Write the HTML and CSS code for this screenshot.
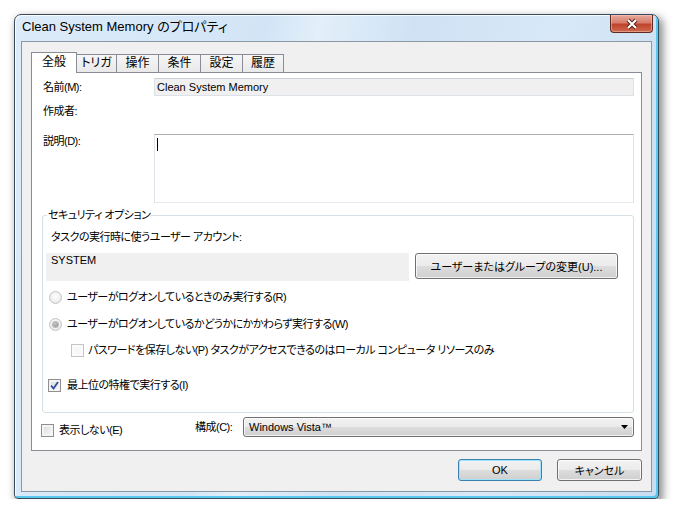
FILE: index.html
```html
<!doctype html>
<html lang="ja">
<head>
    <meta charset="UTF-8">
    <meta name="viewport" content="width=device-width, initial-scale=1.0">
    <title>Clean System Memory のプロパティ</title>

    <link rel="stylesheet" href="styles.css">
</head>
<body>
    <div class="window">
        <div class="titlebar">
            <span class="title">Clean System Memory のプロパティ</span>
            <button class="close" title="閉じる">
                <svg width="14" height="12" viewBox="0 0 14 12">
                    <path d="M3 2 L11 10 M11 2 L3 10" stroke="#5b2a22" stroke-width="4.2" fill="none"/>
                    <path d="M3 2 L11 10 M11 2 L3 10" stroke="#ffffff" stroke-width="2" fill="none"/>
                </svg>
            </button>
        </div>

        <div class="client">
            <div class="tabs">
                <div class="tab active" style="width: 46px">全般</div>
                <div class="tab" style="width: 41px">トリガ</div>
                <div class="tab" style="width: 43px">操作</div>
                <div class="tab" style="width: 43px">条件</div>
                <div class="tab" style="width: 43px">設定</div>
                <div class="tab" style="width: 42px">履歴</div>
            </div>

            <div class="panel">
                <div class="row name-row">
                    <label>名前(M):</label>
                    <div class="field readonly latin">Clean System Memory</div>
                </div>

                <div class="row author-row">
                    <label>作成者:</label>
                </div>

                <div class="row desc-row">
                    <label>説明(D):</label>
                    <div class="field textarea"><span class="caret"></span></div>
                </div>

                <fieldset class="group">
                    <legend>セキュリティ オプション</legend>

                    <p class="account-label">タスクの実行時に使うユーザー アカウント:</p>

                    <div class="account">
                        <div class="account-box latin">SYSTEM</div>
                        <button class="btn change-user">ユーザーまたはグループの変更(U)...</button>
                    </div>

                    <div class="option radio-1">
                        <span class="radio disabled"></span>
                        <span>ユーザーがログオンしているときのみ実行する(R)</span>
                    </div>

                    <div class="option radio-2">
                        <span class="radio disabled checked"></span>
                        <span>ユーザーがログオンしているかどうかにかかわらず実行する(W)</span>
                    </div>

                    <div class="option no-password">
                        <span class="check disabled"></span>
                        <span>パスワードを保存しない(P) タスクがアクセスできるのはローカル コンピュータ リソースのみ</span>
                    </div>

                    <div class="option highest">
                        <span class="check">
                            <svg width="9" height="9" viewBox="0 0 9 9">
                                <path d="M1 4.5 L3.5 7.5 L8 1" stroke="#2c4f9e" stroke-width="1.8" fill="none"/>
                            </svg>
                        </span>
                        <span>最上位の特権で実行する(I)</span>
                    </div>
                </fieldset>

                <div class="bottom-row">
                    <div class="option hidden-opt">
                        <span class="check"></span>
                        <span>表示しない(E)</span>
                    </div>
                    <label class="config-label">構成(C):</label>
                    <div class="combo">
                        <span class="latin">Windows Vista™</span>
                        <svg width="7" height="4" viewBox="0 0 7 4"><path d="M0 0 H7 L3.5 4 Z" fill="#000"/></svg>
                    </div>
                </div>
            </div>

            <div class="actions">
                <button class="btn default ok latin">OK</button>
                <button class="btn cancel">キャンセル</button>
            </div>
        </div>
    </div>
</body>
</html>
```

FILE: styles.css
```css
body {
    margin: 0;
    background-color: #ffffff;
    font-family: "Liberation Sans", "Noto Sans CJK JP", sans-serif;
    font-size: 11px;
    letter-spacing: -0.5px;
    font-feature-settings: "palt";
    color: #000;
    user-select: none;
}

.latin {
    letter-spacing: 0;
}

.window {
    margin: 14px 0 0 14px;
    width: 645px;
    height: 485px;
    box-sizing: border-box;
    display: flex;
    flex-direction: column;
    border: 1px solid #3a4a5c;
    border-radius: 7px 7px 4px 4px;
    background: linear-gradient(100deg, #dcebf9 0%, #d2e5f6 35%, #e3eff9 42%, #cfe2f4 55%, #d8e8f7 75%, #c8ddf1 100%);
    box-shadow: inset 1px 1px 0 rgba(255, 255, 255, .85),
                inset -2px -2px 0 #58c8ef,
                3px 4px 9px 1px rgba(0, 0, 0, .45);
}

.titlebar {
    height: 26px;
    display: flex;
    align-items: flex-start;
    justify-content: space-between;
}

.title {
    font-size: 13px;
    letter-spacing: 0;
    margin: 4px 0 0 7px;
    line-height: 16px;
    color: #000;
}

.close {
    width: 43px;
    height: 18px;
    margin: 0 5px 0 0;
    padding: 0;
    border: 1px solid #5e2a22;
    border-top: 0;
    border-radius: 0 0 4px 4px;
    background: linear-gradient(#e8a99d 0%, #d67d6b 45%, #c0432c 55%, #cf6a4f 100%);
    box-shadow: inset 0 0 0 1px rgba(255, 210, 200, .45);
    display: flex;
    align-items: center;
    justify-content: center;
}

.client {
    flex: 1;
    margin: 0 6px 6px 6px;
    border: 1px solid #8c97a4;
    background-color: #f0f0f0;
    padding-top: 10px;
    display: flex;
    flex-direction: column;
}

.tabs {
    display: flex;
    align-items: flex-end;
    height: 20px;
    margin-left: 9px;
    font-size: 12px;
    letter-spacing: 0;
}

.tab {
    height: 18px;
    box-sizing: border-box;
    border: 1px solid #898c95;
    border-bottom: 0;
    margin-left: -1px;
    background: linear-gradient(#f6f6f6, #e9e9e9);
    text-align: center;
    line-height: 17px;
}

.tab.active {
    height: 21px;
    margin: 0 0 -1px 0;
    background: #ffffff;
    line-height: 18px;
    position: relative;
    z-index: 1;
}

.panel {
    margin: 0 9px;
    height: 379px;
    box-sizing: border-box;
    border: 1px solid #898c95;
    background-color: #ffffff;
    padding: 5px 7px 0 10px;
}

.row {
    display: grid;
    grid-template-columns: 112px 1fr;
}

.row label {
    padding-left: 1px;
}

.name-row {
    height: 18px;
    line-height: 18px;
}

.author-row {
    margin-top: 6px;
    height: 18px;
    line-height: 18px;
}

.desc-row {
    margin-top: 14px;
    height: 69px;
}

.desc-row label {
    line-height: 14px;
}

.field {
    box-sizing: border-box;
    border: 1px solid #dbe1e6;
}

.readonly {
    background-color: #f0f0f0;
    border-top-color: #ccd1d6;
    padding-left: 2px;
    line-height: 16px;
}

.textarea {
    background: #ffffff;
    border-color: #abadb3 #e2e3ea #e3e9ef #e2e3ea;
    padding: 3px 0 0 2px;
}

.caret {
    display: block;
    width: 1px;
    height: 13px;
    background-color: #000;
}

.group {
    margin: 4px 0 0 0;
    height: 206px;
    box-sizing: border-box;
    border: 1px solid #d5dfe5;
    border-radius: 3px;
    padding: 0 0 0 4px;
}

.group legend {
    padding: 0 1px;
    line-height: 16px;
}

.account-label {
    margin: 6px 0 0 4px;
    line-height: 16px;
}

.account {
    display: flex;
    align-items: flex-start;
    gap: 6px;
    margin: 8px 0 0 -1px;
}

.account-box {
    width: 363px;
    height: 28px;
    box-sizing: border-box;
    background-color: #f0f0f0;
    padding: 0 0 0 5px;
    line-height: 14px;
}

.btn {
    font: inherit;
    color: #000;
    box-sizing: border-box;
    border: 1px solid #707070;
    border-radius: 3px;
    background: linear-gradient(#f2f2f2 0%, #ebebeb 50%, #dddddd 51%, #cfcfcf 100%);
    box-shadow: inset 0 0 0 1px rgba(255, 255, 255, .75);
    padding: 0;
}

.change-user {
    width: 203px;
    height: 26px;
}

.option {
    display: flex;
    align-items: center;
    height: 16px;
    line-height: 16px;
}

.radio-1 {
    margin: 8px 0 0 2px;
    gap: 5px;
}

.radio-2 {
    margin: 11px 0 0 2px;
    gap: 5px;
}

.no-password {
    margin: 10px 0 0 24px;
    gap: 4px;
}

.highest {
    margin: 19px 0 0 1px;
    gap: 6px;
}

.radio {
    width: 13px;
    height: 13px;
    box-sizing: border-box;
    border-radius: 50%;
    border: 1px solid #c4c4c4;
    background: radial-gradient(circle at 50% 40%, #ffffff 0%, #eeeeee 60%, #e2e2e2 100%);
    display: flex;
    align-items: center;
    justify-content: center;
}

.radio.checked::after {
    content: "";
    width: 5px;
    height: 5px;
    border-radius: 50%;
    background: radial-gradient(circle at 40% 35%, #c6c6c6, #8a8a8a);
    box-shadow: 0 0 0 1px #b7b7b7;
}

.check {
    width: 13px;
    height: 13px;
    box-sizing: border-box;
    border: 1px solid #8f8f8f;
    background: linear-gradient(135deg, #dadada, #f9f9f9);
    box-shadow: inset 0 0 0 2px #f4f4f4;
    display: flex;
    align-items: center;
    justify-content: center;
    flex: none;
}

.check.disabled {
    border-color: #c4c4c4;
    background: #f7f7f7;
    box-shadow: inset 0 0 0 2px #fbfbfb;
}

.bottom-row {
    display: flex;
    align-items: flex-start;
    margin-top: 4px;
    height: 20px;
}

.hidden-opt {
    width: 154px;
    margin: 5px 0 0 -1px;
    gap: 5px;
}

.config-label {
    width: 48px;
    line-height: 20px;
}

.combo {
    flex: 1;
    height: 20px;
    box-sizing: border-box;
    border: 1px solid #707070;
    border-radius: 3px;
    background: linear-gradient(#f2f2f2 0%, #ebebeb 50%, #dddddd 51%, #cfcfcf 100%);
    box-shadow: inset 0 0 0 1px rgba(255, 255, 255, .75);
    display: flex;
    align-items: center;
    justify-content: space-between;
    padding: 0 5px 0 5px;
}

.actions {
    display: flex;
    justify-content: flex-end;
    gap: 15px;
    margin: 8px 9px 0 0;
}

.ok {
    width: 84px;
    height: 22px;
}

.cancel {
    width: 85px;
    height: 22px;
}

.btn.default {
    border-color: #3c7fb1;
    box-shadow: inset 0 0 0 1px #9ce3fb;
}
```
